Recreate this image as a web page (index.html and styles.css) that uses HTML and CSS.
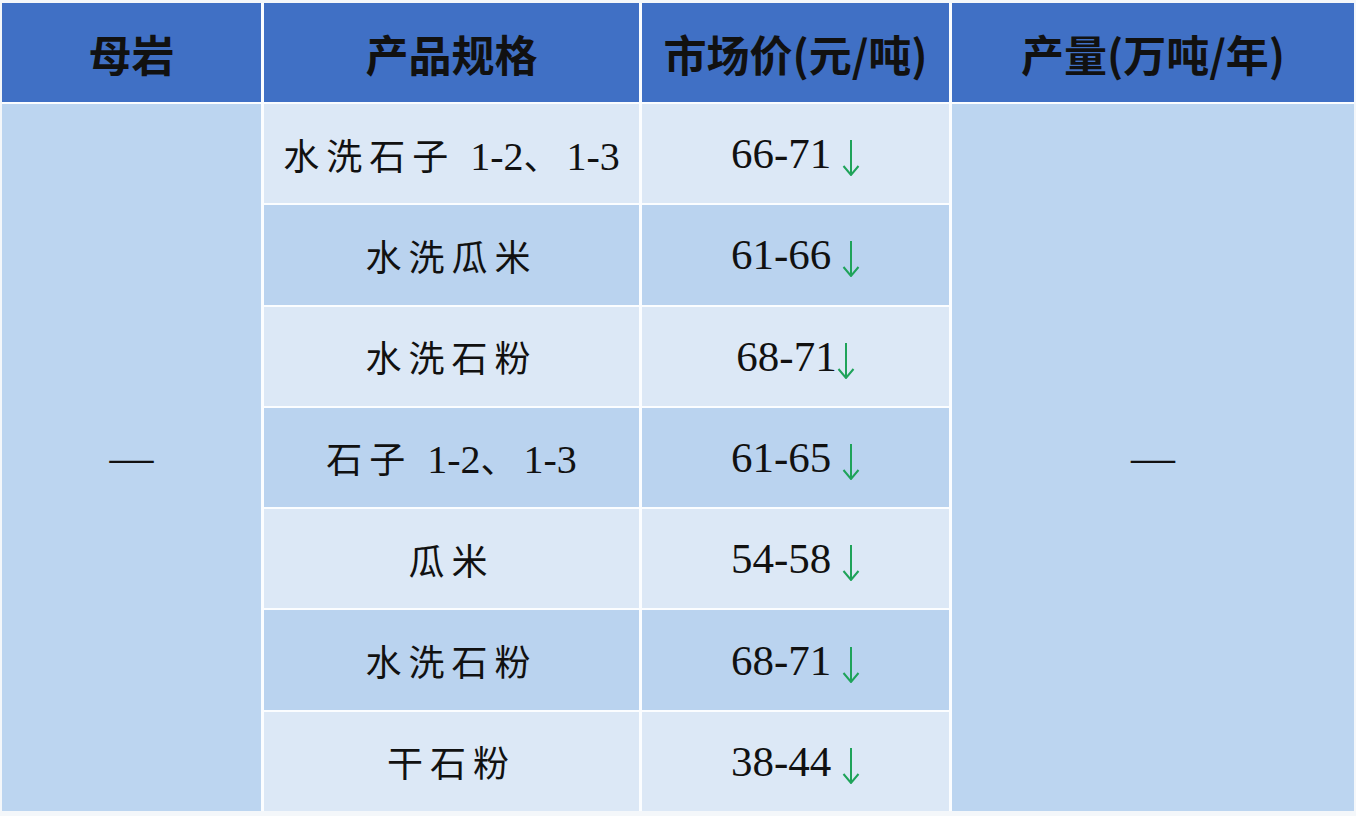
FILE: index.html
```html
<!DOCTYPE html>
<html lang="zh">
<head>
<meta charset="utf-8">
<link rel="stylesheet" href="styles.css">
</head>
<body>
<div class="table">
  <div class="th">母岩</div>
  <div class="th">产品规格</div>
  <div class="th">市场价(元/吨)</div>
  <div class="th">产量(万吨/年)</div>

  <div class="td merged first"><span>—</span></div>
  <div class="td merged last"><span>—</span></div>

  <div class="td spec light"><span>水洗石子 <span class="num">1-2</span>、<span class="num">1-3</span></span></div>
  <div class="td price light"><span><span class="num">66-71</span> <svg class="arrow" viewBox="0 0 18 36"><path d="M9 0V35M1.5 26L9 35L16.5 26"/></svg></span></div>

  <div class="td spec dark"><span>水洗瓜米</span></div>
  <div class="td price dark"><span><span class="num">61-66</span> <svg class="arrow" viewBox="0 0 18 36"><path d="M9 0V35M1.5 26L9 35L16.5 26"/></svg></span></div>

  <div class="td spec light"><span>水洗石粉</span></div>
  <div class="td price light"><span><span class="num">68-71</span><svg class="arrow" viewBox="0 0 18 36"><path d="M9 0V35M1.5 26L9 35L16.5 26"/></svg></span></div>

  <div class="td spec dark"><span>石子 <span class="num">1-2</span>、<span class="num">1-3</span></span></div>
  <div class="td price dark"><span><span class="num">61-65</span> <svg class="arrow" viewBox="0 0 18 36"><path d="M9 0V35M1.5 26L9 35L16.5 26"/></svg></span></div>

  <div class="td spec light"><span>瓜米</span></div>
  <div class="td price light"><span><span class="num">54-58</span> <svg class="arrow" viewBox="0 0 18 36"><path d="M9 0V35M1.5 26L9 35L16.5 26"/></svg></span></div>

  <div class="td spec dark"><span>水洗石粉</span></div>
  <div class="td price dark"><span><span class="num">68-71</span> <svg class="arrow" viewBox="0 0 18 36"><path d="M9 0V35M1.5 26L9 35L16.5 26"/></svg></span></div>

  <div class="td spec light"><span>干石粉</span></div>
  <div class="td price light"><span><span class="num">38-44</span> <svg class="arrow" viewBox="0 0 18 36"><path d="M9 0V35M1.5 26L9 35L16.5 26"/></svg></span></div>
</div>
</body>
</html>
```
FILE: styles.css
```css
html, body {
  margin: 0;
  padding: 0;
}
body {
  width: 1356px;
  height: 816px;
  background: #f4f7fa;
  overflow: hidden;
  padding-top: 3px;
  padding-left: 2px;
  box-sizing: border-box;
}
.table {
  display: grid;
  width: 1352px;
  height: 808px;
  grid-template-columns: 259px 375px 307px 1fr;
  grid-template-rows: 99px repeat(7, 1fr);
  column-gap: 3px;
  row-gap: 2px;
  background: #fbfdff;
}
.th {
  background: #4070c5;
  color: #111;
  font-family: "Noto Sans CJK SC", sans-serif;
  font-weight: 700;
  font-size: 43px;
  display: flex;
  align-items: center;
  justify-content: center;
}
.td {
  display: flex;
  align-items: center;
  justify-content: center;
  color: #111;
  white-space: pre;
}
.merged {
  background: #bcd5f0;
  font-family: "Liberation Serif", serif;
  font-size: 44px;
}
.first {
  grid-column: 1;
  grid-row: 2 / span 7;
}
.last {
  grid-column: 4;
  grid-row: 2 / span 7;
}
.light {
  background: #dce8f6;
}
.dark {
  background: #bad3ef;
}
.spec {
  font-family: "Noto Sans CJK SC", sans-serif;
  font-weight: 400;
  font-size: 36px;
  letter-spacing: 7px;
}
.spec .num {
  font-family: "Liberation Serif", serif;
  font-size: 40px;
  letter-spacing: 0;
}
.price {
  font-family: "Liberation Serif", serif;
  font-size: 43px;
}
.arrow {
  width: 18px;
  height: 36px;
  vertical-align: -8px;
  fill: none;
  stroke: #1fa35a;
  stroke-width: 2;
}
```
